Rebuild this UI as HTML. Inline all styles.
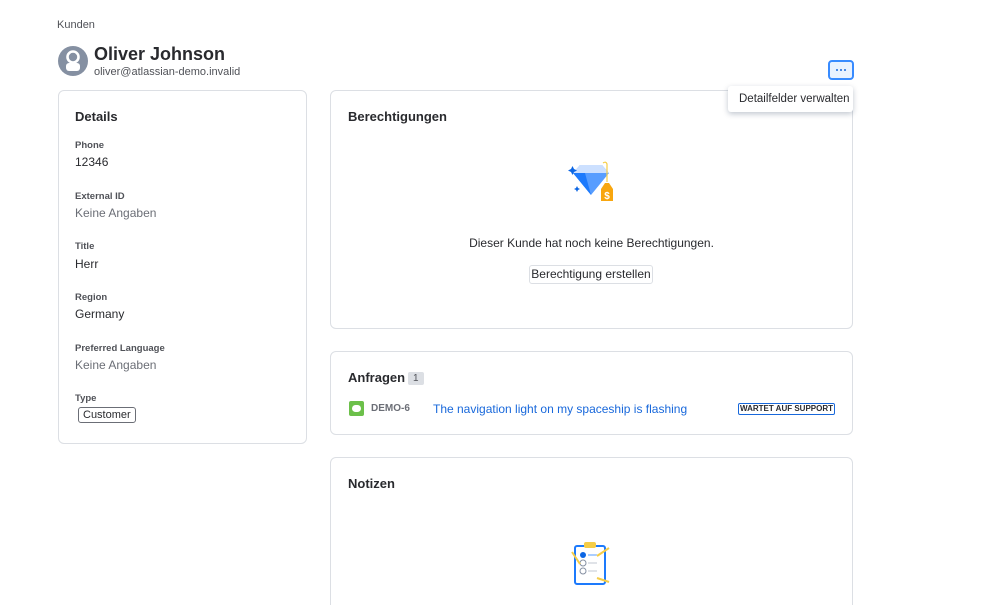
<!DOCTYPE html>
<html><head><meta charset="utf-8"><style>
*{box-sizing:border-box;margin:0;padding:0}
html,body{width:999px;height:605px;overflow:hidden}
body{background:#fff;font-family:"Liberation Sans",sans-serif;color:#292a2e;position:relative}
.abs{position:absolute}
.card{position:absolute;border:1px solid #dcdfe4;border-radius:6px;background:#fff}
.lbl{position:absolute;left:16px;font-size:9.5px;font-weight:bold;color:#505258}
.val{position:absolute;left:16px;font-size:12px;color:#292a2e}
.muted{color:#6b6e76}
h3{position:absolute;font-size:13px;font-weight:bold;color:#292a2e}
</style></head><body>
<div class="abs" style="left:57px;top:19px;font-size:11px;color:#505258">Kunden</div>
<svg class="abs" style="left:58px;top:46px" width="30" height="30" viewBox="0 0 30 30"><circle cx="15" cy="15" r="15" fill="#8590a2"/><circle cx="15" cy="11" r="5.5" fill="none" stroke="#fff" stroke-width="2.6"/><rect x="8" y="17" width="14" height="8" rx="3" fill="#fff"/></svg>
<div class="abs" style="left:94px;top:44px;font-size:18px;font-weight:bold;color:#292a2e">Oliver Johnson</div>
<div class="abs" style="left:94px;top:66px;font-size:11px;color:#505258">oliver@atlassian-demo.invalid</div>

<div class="card" style="left:58px;top:90px;width:249px;height:354px">
<h3 style="left:16px;top:18px">Details</h3>
<div class="lbl" style="top:49px">Phone</div><div class="val" style="top:64px">12346</div>
<div class="lbl" style="top:100px">External ID</div><div class="val muted" style="top:115px">Keine Angaben</div>
<div class="lbl" style="top:150px">Title</div><div class="val" style="top:166px">Herr</div>
<div class="lbl" style="top:201px">Region</div><div class="val" style="top:216px">Germany</div>
<div class="lbl" style="top:252px">Preferred Language</div><div class="val muted" style="top:267px">Keine Angaben</div>
<div class="lbl" style="top:302px">Type</div>
<div class="abs" style="left:19px;top:316px;border:1px solid #6b6e76;border-radius:3px;padding:1px 4px;font-size:11px;line-height:12px">Customer</div>
</div>

<div class="card" style="left:330px;top:90px;width:523px;height:239px">
<h3 style="left:17px;top:18px">Berechtigungen</h3>
<svg class="abs" style="left:236px;top:68px" width="50" height="50" viewBox="0 0 50 50"><path d="M6 14l7-8h22l7 8-18 22z" fill="#579dff"/><path d="M13 6h22l7 8H6z" fill="#cce0ff"/><path d="M6 14h12l6 22z" fill="#1d7afc"/><path d="M4 10l1.5-3 1.5 3 3 1.5-3 1.5-1.5 3-1.5-3-3-1.5z" fill="#0c66e4"/><path d="M9 29l1-2 1 2 2 1-2 1-1 2-1-2-2-1z" fill="#0c66e4"/><path d="M36 4q3-2 4 1v18" stroke="#f5cd47" stroke-width="1.2" fill="none"/><path d="M34 30l4-6h4l4 6v12h-12z" fill="#f8a60f"/><text x="40" y="40" font-size="10" font-weight="bold" fill="#fff" text-anchor="middle" font-family="Liberation Sans">$</text></svg>
<div class="abs" style="left:0;width:521px;top:145px;text-align:center;font-size:12px;color:#292a2e">Dieser Kunde hat noch keine Berechtigungen.</div>
<div class="abs" style="left:198px;top:174px;width:124px;height:19px;border:1px solid #dcdfe4;border-radius:3px;font-size:12px;line-height:17px;text-align:center">Berechtigung erstellen</div>
</div>

<div class="card" style="left:330px;top:351px;width:523px;height:84px">
<h3 style="left:17px;top:18px">Anfragen</h3>
<div class="abs" style="left:77px;top:20px;background:#dcdfe4;border-radius:2px;font-size:10px;padding:1px 5px;line-height:11px;color:#505258">1</div>
<div class="abs" style="left:18px;top:49px;width:15px;height:15px;background:#6cc04a;border-radius:2px"><div style="margin:4px 3px;width:9px;height:7px;background:#fff;border-radius:4px"></div></div>
<div class="abs" style="left:40px;top:51px;font-size:10px;font-weight:bold;color:#6b6e76">DEMO-6</div>
<div class="abs" style="left:102px;top:50px;font-size:12px;color:#1868db">The navigation light on my spaceship is flashing</div>
<div class="abs" style="left:407px;top:51px;width:97px;border:1px solid #1868db;border-radius:2px;font-size:8px;font-weight:bold;text-align:center;line-height:10px;color:#292a2e">WARTET AUF SUPPORT</div>
</div>

<div class="card" style="left:330px;top:457px;width:523px;height:160px">
<h3 style="left:17px;top:18px">Notizen</h3>
<svg class="abs" style="left:236px;top:80px" width="50" height="50" viewBox="0 0 50 50"><rect x="8" y="8" width="30" height="38" rx="2" fill="#fff" stroke="#1d7afc" stroke-width="2"/><rect x="17" y="4" width="12" height="6" rx="2" fill="#f5cd47"/><circle cx="16" cy="17" r="3" fill="#0c66e4"/><path d="M21 17h9" stroke="#579dff"/><circle cx="16" cy="25" r="3" fill="none" stroke="#8590a2"/><path d="M21 25h9" stroke="#c1c7d0"/><circle cx="16" cy="33" r="3" fill="none" stroke="#8590a2"/><path d="M21 33h9" stroke="#c1c7d0"/><path d="M30 18l12-8M5 14l8 12M30 40l12 4" stroke="#f5cd47" stroke-width="2"/></svg>
</div>

<div class="abs" style="left:828px;top:60px;width:26px;height:20px;border:2px solid #388bff;border-radius:4px;background:#e9f2ff;z-index:5">
<div style="position:absolute;left:6px;top:7px;width:2px;height:2px;background:#1868db;border-radius:1px;box-shadow:4px 0 #1868db,8px 0 #1868db"></div></div>
<div class="abs" style="left:728px;top:86px;width:125px;height:26px;background:#fff;box-shadow:0 2px 6px rgba(9,30,66,.25);border-radius:3px;font-size:11.5px;line-height:26px;padding-left:11px;color:#292a2e;z-index:5">Detailfelder verwalten</div>
</body></html>
